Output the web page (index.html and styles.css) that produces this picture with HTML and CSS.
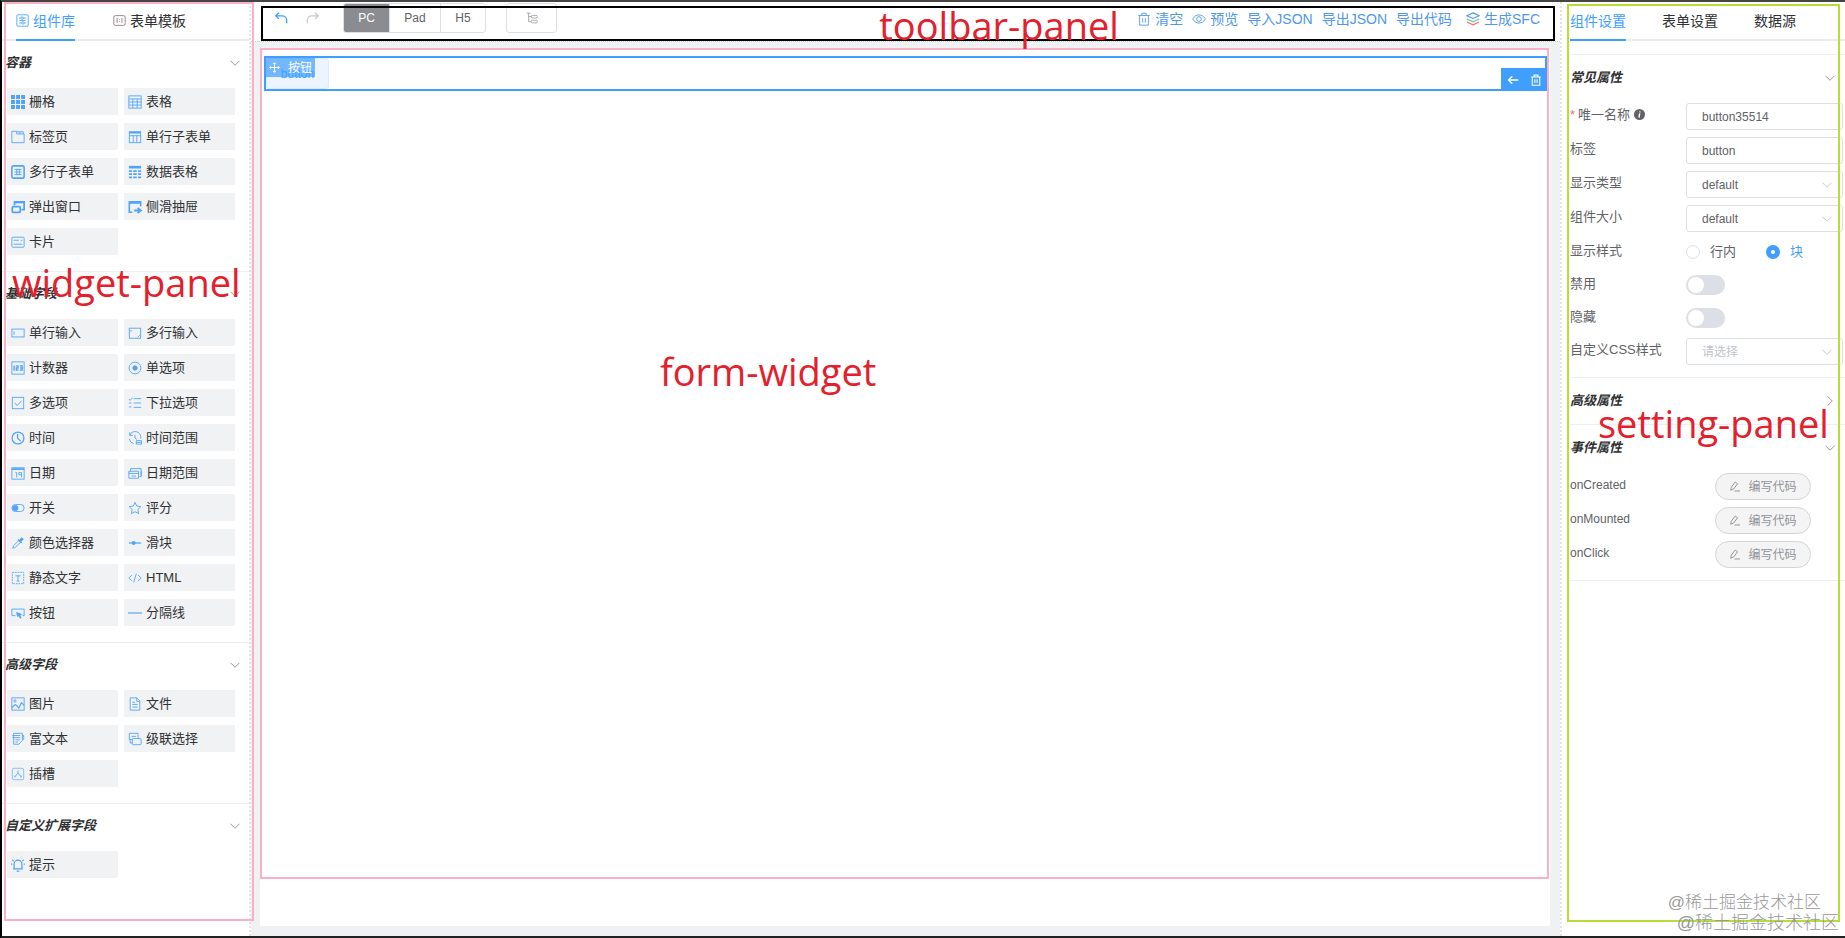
FILE: index.html
```html
<!DOCTYPE html>
<html lang="zh-CN">
<head>
<meta charset="utf-8">
<title>表单设计器</title>
<link rel="stylesheet" href="styles.css">
</head>
<body>
<svg class="sprite" aria-hidden="true">
  <symbol id="down" viewBox="0 0 16 16"><path d="M2 5l6 6 6-6"/></symbol>
  <symbol id="right" viewBox="0 0 16 16"><path d="M5 2l6 6-6 6"/></symbol>
  <symbol id="lib" viewBox="0 0 16 16"><rect x="1" y="1" width="14" height="14" rx="1"/><path d="M3.500 5H6M9 5h3.500M3.500 11H7M10 11h2.500M4 8h8"/><circle cx="7.500" cy="5" r="1.500"/><circle cx="8.500" cy="11" r="1.500"/></symbol>
  <symbol id="tpl" viewBox="0 0 16 16"><rect x="1" y="2" width="14" height="12" rx="2"/><path d="M5 5v6M11 5v6M8 6v1M8 9v1"/></symbol>
  <symbol id="grid" viewBox="0 0 16 16"><path fill="currentColor" stroke="none" d="M0 0h4.500v4.500H0zM5.800 0h4.500v4.500H5.800zM11.500 0H16v4.500h-4.500zM0 5.800h4.500v4.500H0zM5.800 5.800h4.500v4.500H5.800zM11.500 5.800H16v4.500h-4.500zM0 11.500h4.500V16H0zM5.800 11.500h4.500V16H5.800zM11.500 11.500H16V16h-4.500z"/></symbol>
  <symbol id="table" viewBox="0 0 16 16"><rect x="1" y="1" width="14" height="14"/><path d="M1 4.500h14M1 8h14M1 11.500h14M5.500 4.500V15M10.500 4.500V15"/></symbol>
  <symbol id="tab" viewBox="0 0 16 16"><path d="M1 14.500v-13h5.500V4.500H15v10zM6.500 2H10v2.500M10 2h4v2.500"/></symbol>
  <symbol id="subform" viewBox="0 0 16 16"><rect x="1.500" y="2" width="13" height="12.500"/><path d="M1.500 6.500h13M6 6.500v8M10 6.500v8"/><path stroke-width="2" d="M1.500 3h13"/></symbol>
  <symbol id="multiform" viewBox="0 0 16 16"><rect x="1" y="1" width="14" height="14" rx="2" stroke-width="1.800"/><path d="M4 5h8M4 8h8M4 11h8M6.500 4.500v7M9.500 4.500v7"/></symbol>
  <symbol id="data" viewBox="0 0 16 16"><path stroke-width="3" d="M1 2.500h14"/><path stroke-width="2" d="M1 7h3.500M6 7h4M11.500 7H15M1 10.500h3.500M6 10.500h4M11.500 10.500H15M1 14h3.500M6 14h4M11.500 14H15"/></symbol>
  <symbol id="dialog" viewBox="0 0 16 16"><path stroke-width="2" d="M4 6V2h11v9h-3"/><path stroke-width="2.600" d="M4 2.500h11"/><rect x="1.500" y="7.500" width="9" height="6.500" rx="1" stroke-width="2"/></symbol>
  <symbol id="drawer" viewBox="0 0 16 16"><path stroke-width="1.800" d="M5 14H1.500V2h13v5"/><path stroke-width="2.600" d="M1.500 3h13"/><path stroke-width="2.200" d="M7 12h6M11 9l3.500 3-3.500 3"/></symbol>
  <symbol id="card" viewBox="0 0 16 16"><rect x="1" y="2.500" width="14" height="11.500" rx="1"/><path d="M3 6h6M11 6h2M3 10.500h10"/></symbol>
  <symbol id="input" viewBox="0 0 16 16"><rect x="1" y="3.500" width="14" height="9"/><path d="M3.500 6v4"/></symbol>
  <symbol id="textarea" viewBox="0 0 16 16"><rect x="1.500" y="2.500" width="13" height="11.500"/><path d="M3.500 4.500v2M11 13l2.500-2.500"/></symbol>
  <symbol id="number" viewBox="0 0 16 16"><rect x="1" y="1" width="14" height="14"/><path stroke-width="1.500" d="M3.500 5v6M5.500 5.500h2.500V8H6v2.500h2.500M10 5.500h2.800v5H10M10.500 8h2"/></symbol>
  <symbol id="radio" viewBox="0 0 16 16"><circle cx="8" cy="8" r="6.800"/><circle cx="8" cy="8" r="2.500" fill="currentColor"/></symbol>
  <symbol id="check" viewBox="0 0 16 16"><rect x="1.500" y="1.500" width="13" height="13"/><path d="M4.500 8l2.500 3 5-5.500"/></symbol>
  <symbol id="select" viewBox="0 0 16 16"><path d="M6.500 3H15M6.500 8H15M6.500 13H15M1 3.500L2.500 5 5 2M1 8h3M1 12.500h3"/></symbol>
  <symbol id="time" viewBox="0 0 16 16"><circle cx="8" cy="8" r="6.800" stroke-width="1.400"/><path stroke-width="1.400" d="M7.500 3.500V8l3.500 3.500"/></symbol>
  <symbol id="timerange" viewBox="0 0 16 16"><path d="M2 5a6.500 6.500 0 0 1 12.500 3.500M2 1.500V5h3.500M1.500 9a6.500 6.500 0 0 0 5 5.500M8 4.500V8l2 1.500M9.500 11h6v4h-6zM9.500 13h6"/></symbol>
  <symbol id="date" viewBox="0 0 16 16"><rect x="1" y="2" width="14" height="13"/><path stroke-width="2" d="M1 3.500h14"/><path d="M5 7.500h1.500V13M9 7.500h3V13M9 7.500V10h3"/></symbol>
  <symbol id="daterange" viewBox="0 0 16 16"><path d="M3 3h12v8M1 6h11v8H1zM1 8.500h11M3 3v3M4 11.500h5M13 12h2V6"/></symbol>
  <symbol id="switch" viewBox="0 0 16 16"><rect x="1" y="4" width="14" height="8" rx="4"/><circle cx="5" cy="8" r="3" fill="currentColor"/></symbol>
  <symbol id="star" viewBox="0 0 16 16"><path d="M8 1.500l2 4.300 4.700.6-3.400 3.300.8 4.800L8 12.200l-4.100 2.300.8-4.800L1.300 6.400 6 5.800z"/></symbol>
  <symbol id="color" viewBox="0 0 16 16"><path d="M2 14l1-3 6-6 2 2-6 6z"/><path stroke-width="1.600" d="M8 4l4 4"/><path stroke-width="3.400" d="M10.500 5.500l3-3"/></symbol>
  <symbol id="slider" viewBox="0 0 16 16"><path stroke-width="1.400" d="M1 8h14"/><circle cx="6.500" cy="8" r="2.200" fill="currentColor" stroke="none"/></symbol>
  <symbol id="text" viewBox="0 0 16 16"><rect x="1.500" y="1.500" width="13" height="13" stroke-dasharray="2 1"/><path d="M5 5.500h6M8 5.500v6M6.500 11.500h3"/></symbol>
  <symbol id="html" viewBox="0 0 16 16"><path d="M4.500 4.500L1 8l3.500 3.500M11.500 4.500L15 8l-3.500 3.500M9.500 3l-3 10"/></symbol>
  <symbol id="button" viewBox="0 0 16 16"><path d="M5 11H1V3.500h14V11h-2"/><path fill="currentColor" d="M6.500 7.500l5.500 2-2 1 1.500 3-1 .5-1.500-3-1.500 1z"/></symbol>
  <symbol id="line" viewBox="0 0 16 16"><path stroke-width="1.300" d="M0 8h16"/></symbol>
  <symbol id="image" viewBox="0 0 16 16"><rect x="1" y="1" width="14" height="14"/><circle cx="4.500" cy="4.500" r="1.300"/><path stroke-width="1.300" d="M1 12l4-3.500 4 4 3-6 3 3"/></symbol>
  <symbol id="file" viewBox="0 0 16 16"><path d="M2.500 1h7.500l3.500 3.500V15h-11zM10 1v4h3.500M5 6h3M5 8.500h6M5 11.500h6"/></symbol>
  <symbol id="rich" viewBox="0 0 16 16"><path d="M3 1.500h10v8L9 14H3zM1.500 4h9M1.500 6.500h9M5 9h5M5 11.500h3M13 4h1.500v5"/></symbol>
  <symbol id="cascade" viewBox="0 0 16 16"><path d="M5 8.500H1.500v-7h10v6M4 5h5M2.500 8.500v4H5"/><rect x="5" y="7.500" width="10" height="7" rx="1"/></symbol>
  <symbol id="slot" viewBox="0 0 16 16"><rect x="1.500" y="1.500" width="13" height="13" rx="2" opacity=".7"/><path d="M8 4v3L4.500 11M8 7l3.500 4M4.500 10v2M11.500 10v2"/></symbol>
  <symbol id="alert" viewBox="0 0 16 16"><path stroke-width="1.400" d="M3.500 12.500V7a4.500 4.500 0 0 1 9 0v5.500zM2.500 12.500h11M6.500 15h3M1.500 2l1.500 1.500M14.500 2L13 3.500M0 7h1.500M14.500 7H16"/></symbol>
  <symbol id="undo" viewBox="0 0 16 16"><path stroke-width="1.500" d="M5.500 2L2 5.500 5.500 9M2 5.500h7.500a5 5 0 0 1 5 5V14"/></symbol>
  <symbol id="redo" viewBox="0 0 16 16"><path stroke-width="1.500" d="M10.500 2L14 5.500 10.500 9M14 5.500H6.500a5 5 0 0 0-5 5V14"/></symbol>
  <symbol id="tree" viewBox="0 0 16 16"><path d="M1 1.500h5M3.500 1.500V13H7M3.500 6H7"/><rect x="7" y="4.500" width="8" height="3.500" rx="1.500"/><rect x="7" y="11" width="8" height="3.500" rx="1.500"/></symbol>
  <symbol id="trash" viewBox="0 0 16 16"><path d="M1.500 4h13M5.500 4V1.500h5V4M3 4v11h10V4M6.500 7v5M9.500 7v5"/></symbol>
  <symbol id="eye" viewBox="0 0 16 16"><path d="M.8 8C4 1.800 12 1.800 15.200 8 12 14.200 4 14.200.8 8z"/><circle cx="8" cy="8" r="2.700"/></symbol>
  <symbol id="layers" viewBox="0 0 16 16"><path stroke-width="1.300" d="M8 1l7 3.200-7 3.200-7-3.200z"/><path stroke="#5fcf9a" stroke-width="1.300" d="M1 8l7 3.200L15 8"/><path stroke="#f36c6c" stroke-width="1.300" d="M1 11.500l7 3.200 7-3.200"/></symbol>
  <symbol id="move" viewBox="0 0 16 16"><path stroke-width="1.400" d="M8 1v14M1 8h14M6 3l2-2 2 2M6 13l2 2 2-2M3 6L1 8l2 2M13 6l2 2-2 2"/></symbol>
  <symbol id="back" viewBox="0 0 16 16"><path stroke-width="1.800" d="M15 8H2M7 3L2 8l5 5"/></symbol>
  <symbol id="pen" viewBox="0 0 16 16"><path stroke-width="1.400" d="M2.500 13.500l.8-4.500L9 1.500l3.500 2.500-5.700 7.500zM8 14.500h8"/></symbol>
  <symbol id="info" viewBox="0 0 16 16"><circle cx="8" cy="8" r="8" fill="currentColor" stroke="none"/><path stroke="#fff" stroke-width="2" d="M8.800 3.500L8.500 5M8.300 6.500L7.300 12.500"/></symbol>
</svg>

<div class="designer">
  <aside class="widget-panel">
    <div class="tabs widget-tabs" role="tablist">
      <button class="tab active" role="tab" aria-selected="true"><svg class="icon"><use href="#lib"/></svg>组件库</button>
      <button class="tab" role="tab" aria-selected="false"><svg class="icon tpl"><use href="#tpl"/></svg>表单模板</button>
    </div>
    <section class="group">
      <button class="group-head">容器<svg class="icon"><use href="#down"/></svg></button>
      <ul class="widgets">
        <li><svg class="icon"><use href="#grid"/></svg>栅格</li>
        <li><svg class="icon"><use href="#table"/></svg>表格</li>
        <li><svg class="icon"><use href="#tab"/></svg>标签页</li>
        <li><svg class="icon"><use href="#subform"/></svg>单行子表单</li>
        <li><svg class="icon"><use href="#multiform"/></svg>多行子表单</li>
        <li><svg class="icon"><use href="#data"/></svg>数据表格</li>
        <li><svg class="icon"><use href="#dialog"/></svg>弹出窗口</li>
        <li><svg class="icon"><use href="#drawer"/></svg>侧滑抽屉</li>
        <li><svg class="icon"><use href="#card"/></svg>卡片</li>
      </ul>
    </section>
    <section class="group">
      <button class="group-head">基础字段<svg class="icon"><use href="#down"/></svg></button>
      <ul class="widgets">
        <li><svg class="icon"><use href="#input"/></svg>单行输入</li>
        <li><svg class="icon"><use href="#textarea"/></svg>多行输入</li>
        <li><svg class="icon"><use href="#number"/></svg>计数器</li>
        <li><svg class="icon"><use href="#radio"/></svg>单选项</li>
        <li><svg class="icon"><use href="#check"/></svg>多选项</li>
        <li><svg class="icon"><use href="#select"/></svg>下拉选项</li>
        <li><svg class="icon"><use href="#time"/></svg>时间</li>
        <li><svg class="icon"><use href="#timerange"/></svg>时间范围</li>
        <li><svg class="icon"><use href="#date"/></svg>日期</li>
        <li><svg class="icon"><use href="#daterange"/></svg>日期范围</li>
        <li><svg class="icon"><use href="#switch"/></svg>开关</li>
        <li><svg class="icon"><use href="#star"/></svg>评分</li>
        <li><svg class="icon"><use href="#color"/></svg>颜色选择器</li>
        <li><svg class="icon"><use href="#slider"/></svg>滑块</li>
        <li><svg class="icon"><use href="#text"/></svg>静态文字</li>
        <li><svg class="icon"><use href="#html"/></svg>HTML</li>
        <li><svg class="icon"><use href="#button"/></svg>按钮</li>
        <li><svg class="icon"><use href="#line"/></svg>分隔线</li>
      </ul>
    </section>
    <section class="group">
      <button class="group-head">高级字段<svg class="icon"><use href="#down"/></svg></button>
      <ul class="widgets">
        <li><svg class="icon"><use href="#image"/></svg>图片</li>
        <li><svg class="icon"><use href="#file"/></svg>文件</li>
        <li><svg class="icon"><use href="#rich"/></svg>富文本</li>
        <li><svg class="icon"><use href="#cascade"/></svg>级联选择</li>
        <li><svg class="icon"><use href="#slot"/></svg>插槽</li>
      </ul>
    </section>
    <section class="group">
      <button class="group-head">自定义扩展字段<svg class="icon"><use href="#down"/></svg></button>
      <ul class="widgets">
        <li><svg class="icon"><use href="#alert"/></svg>提示</li>
      </ul>
    </section>
    <div class="frame"></div>
    <span class="note">widget-panel</span>
  </aside>

  <main class="center">
    <header class="toolbar-panel">
      <div class="tools">
        <button class="history" aria-label="撤销"><svg class="icon"><use href="#undo"/></svg></button>
        <button class="history off" aria-label="重做"><svg class="icon"><use href="#redo"/></svg></button>
        <div class="devices">
          <button class="on">PC</button><button>Pad</button><button>H5</button>
        </div>
        <button class="tree" aria-label="组件树"><svg class="icon"><use href="#tree"/></svg></button>
      </div>
      <div class="actions">
        <button><svg class="icon"><use href="#trash"/></svg>清空</button>
        <button><svg class="icon"><use href="#eye"/></svg>预览</button>
        <button>导入JSON</button>
        <button>导出JSON</button>
        <button>导出代码</button>
        <button class="sfc"><svg class="icon"><use href="#layers"/></svg>生成SFC</button>
      </div>
      <div class="frame"></div>
      <span class="note">toolbar-panel</span>
    </header>
    <div class="stage">
      <div class="form-widget">
        <div class="selected">
          <button class="plain">button</button>
          <div class="handle"><svg class="icon"><use href="#move"/></svg>按钮</div>
          <div class="ops">
            <button aria-label="选中父组件"><svg class="icon"><use href="#back"/></svg></button>
            <button aria-label="删除"><svg class="icon"><use href="#trash"/></svg></button>
          </div>
        </div>
        <div class="frame"></div>
        <span class="note">form-widget</span>
      </div>
    </div>
  </main>

  <aside class="setting-panel">
    <div class="tabs setting-tabs" role="tablist">
      <button class="tab active" role="tab" aria-selected="true">组件设置</button>
      <button class="tab" role="tab" aria-selected="false">表单设置</button>
      <button class="tab" role="tab" aria-selected="false">数据源</button>
    </div>
    <div class="settings">
      <section class="set-group">
        <button class="set-head">常见属性<svg class="icon"><use href="#down"/></svg></button>
        <div class="rows">
          <div class="row"><label for="name"><span class="req">*</span>唯一名称<svg class="icon info"><use href="#info"/></svg></label><input class="field" id="name" type="text" value="button35514"></div>
          <div class="row"><label for="label">标签</label><input class="field" id="label" type="text" value="button"></div>
          <div class="row"><label for="type">显示类型</label><div class="pick"><select class="field" id="type"><option>default</option></select><svg class="icon"><use href="#down"/></svg></div></div>
          <div class="row"><label for="size">组件大小</label><div class="pick"><select class="field" id="size"><option>default</option></select><svg class="icon"><use href="#down"/></svg></div></div>
          <div class="row small"><span>显示样式</span><div class="radios"><label><input type="radio" name="display">行内</label><label class="chosen"><input type="radio" name="display" checked>块</label></div></div>
          <div class="row small"><label for="disabled">禁用</label><input class="toggle" id="disabled" type="checkbox" role="switch"></div>
          <div class="row small"><label for="hidden">隐藏</label><input class="toggle" id="hidden" type="checkbox" role="switch"></div>
          <div class="row"><label for="css">自定义CSS样式</label><div class="pick"><select class="field empty" id="css"><option>请选择</option></select><svg class="icon"><use href="#down"/></svg></div></div>
        </div>
      </section>
      <section class="set-group">
        <button class="set-head">高级属性<svg class="icon"><use href="#right"/></svg></button>
      </section>
      <section class="set-group last">
        <button class="set-head">事件属性<svg class="icon"><use href="#down"/></svg></button>
        <div class="rows events">
          <div class="row"><span>onCreated</span><button class="code"><svg class="icon"><use href="#pen"/></svg>编写代码</button></div>
          <div class="row"><span>onMounted</span><button class="code"><svg class="icon"><use href="#pen"/></svg>编写代码</button></div>
          <div class="row"><span>onClick</span><button class="code"><svg class="icon"><use href="#pen"/></svg>编写代码</button></div>
        </div>
      </section>
    </div>
    <div class="frame"></div>
    <span class="note">setting-panel</span>
    <div class="marks"><span>@稀土掘金技术社区</span><span>@稀土掘金技术社区</span></div>
  </aside>
</div>
</body>
</html>
```

FILE: styles.css
```css
* { box-sizing: border-box; }

body {
  margin: 0;
  font: 13px/20px "Liberation Sans", "Noto Sans CJK SC", sans-serif;
  color: #303133;
  background: #fff;
}

button, input, select { font: inherit; color: inherit; }
button { padding: 0; border: 0; background: none; cursor: pointer; }

.sprite { position: absolute; width: 0; height: 0; }

.icon {
  width: 14px;
  height: 14px;
  flex: none;
  fill: none;
  stroke: currentColor;
  stroke-width: 1;
}

.designer {
  display: grid;
  grid-template-columns: 249px 1fr 285px;
  min-height: 100vh;
  border-top: 2px solid #444;
  border-left: 2px solid #000;
  border-bottom: 2px solid #222;
}

/* Outlines and captions laid over each panel */
.frame {
  position: absolute;
  z-index: 2;
  border: 2px solid #fbb1c5;
  pointer-events: none;
}

.note {
  position: absolute;
  z-index: 3;
  font: 38px/38px "Open Sans", sans-serif;
  color: #e3202c;
  white-space: nowrap;
  pointer-events: none;
}

/* Tabs */
.tabs {
  display: flex;
  height: 39px;
  border-bottom: 2px solid #e8eaee;
}

.tab {
  display: flex;
  align-items: center;
  gap: 4px;
  height: 39px;
  font-size: 14px;
  border-bottom: 2px solid transparent;
}

.tab.active { color: #409eff; border-color: #409eff; }
.tab .icon { width: 13px; height: 13px; }
.tab .tpl { color: #8a6a74; }

/* Widget panel */
.widget-panel {
  position: relative;
  border-right: 2px dotted #e2e3e5;
}

.widget-panel > .frame { inset: 0 -5px 15px 2px; }
.widget-panel > .note { left: 10px; top: 261px; }
.widget-tabs { gap: 38px; padding-left: 14px; }

.group {
  padding-bottom: 16px;
  border-bottom: 1px solid #ebeef5;
}

.group:last-of-type { border-bottom: 0; }

.group-head, .set-head {
  display: flex;
  align-items: center;
  justify-content: space-between;
  width: 100%;
  font-weight: bold;
  font-style: italic;
}

.group-head { height: 44px; padding: 0 8px 0 3px; }
.group-head .icon, .set-head .icon, .pick .icon { width: 12px; height: 12px; color: #73767a; }

.widgets {
  display: grid;
  grid-template-columns: 1fr 1fr;
  gap: 8px 6px;
  margin: 0;
  padding: 3px 14px 0 5px;
  list-style: none;
}

.widgets li {
  display: flex;
  align-items: center;
  gap: 4px;
  height: 27px;
  padding-left: 4px;
  background: #f1f2f3;
}

.widgets .icon { color: #4fa3fb; }

/* Toolbar */
.center {
  display: flex;
  flex-direction: column;
  min-width: 0;
  background: #f0f1f3;
}

.toolbar-panel {
  position: relative;
  display: flex;
  justify-content: space-between;
  height: 40px;
  padding: 1px 20px 0 23px;
  background: #fff;
  border-bottom: 1px dotted #ccc;
}

.toolbar-panel > .frame { inset: 4px 5px 0 10px; border-color: #000; }
.toolbar-panel > .note { left: 48%; top: 4px; }

.tools { display: flex; height: 30px; font-size: 12px; color: #606266; }
.history { width: 14px; margin-right: 18px; color: #409eff; }
.history .icon { display: block; }
.history.off { color: #c8cacd; margin-right: 23px; }

.devices { display: flex; border: 1px solid #dcdfe6; border-radius: 3px; }
.devices button { width: 51px; border-right: 1px solid #dcdfe6; }
.devices button:last-child { width: 44px; border-right: 0; }
.devices .on { width: 46px; color: #fff; background: #8a8c92; border-radius: 2px 0 0 2px; }

.tree { width: 51px; margin-left: 20px; color: #909399; border: 1px solid #dcdfe6; border-radius: 3px; }
.tree .icon { display: block; width: 12px; height: 12px; margin: auto; }

.actions { display: flex; gap: 9px; height: 32px; font-size: 14px; color: #4f98e8; }
.actions button { display: flex; align-items: center; gap: 4px; }
.actions .sfc { margin-left: 5px; }

/* Form canvas */
.stage { display: flex; flex: 1; padding: 8px 10px 10px 9px; }
.form-widget { position: relative; flex: 1; padding: 6px 3px 0 4px; background: #fff; }
.form-widget > .frame { inset: -2px 1px 47px 0; }
.form-widget > .note { left: 31%; top: 302px; }

.selected { position: relative; height: 35px; border: 2px solid #409eff; }
.plain {
  display: block;
  width: 63px;
  height: 31px;
  font-size: 12px;
  color: #409eff;
  background: #ecf5ff;
  border: 1px solid #d9ecff;
  border-radius: 3px;
}

.handle {
  position: absolute;
  left: 0;
  top: 0;
  display: flex;
  align-items: center;
  gap: 8px;
  height: 19px;
  padding: 0 3px;
  font-size: 12px;
  color: #fff;
  background: rgba(64, 158, 255, .7);
}
.handle .icon { width: 11px; height: 11px; }

.ops {
  position: absolute;
  right: -2px;
  bottom: -2px;
  display: flex;
  gap: 11px;
  height: 23px;
  padding: 0 5px 0 6px;
  color: #fff;
  background: #409eff;
}
.ops button { display: flex; align-items: center; }
.ops .icon { width: 12px; height: 12px; stroke-width: 1.4; }

/* Setting panel */
.setting-panel {
  position: relative;
  padding-left: 8px;
  border-left: 2px dotted #e2e3e5;
}

.setting-panel > .frame { inset: 2px 5px 14px; border-color: #b8de35; }
.setting-panel > .note { left: 36px; top: 402px; }

.setting-tabs { gap: 36px; }
.settings { margin-top: 13px; color: #606266; }

.set-group { border-top: 1px solid #ebeef5; }
.set-group.last { border-bottom: 1px solid #ebeef5; }
.set-head { height: 46px; padding-right: 9px; color: #303133; }

.rows { display: grid; gap: 7px; padding: 2px 2px 12px 0; }
.row { display: grid; grid-template-columns: 116px 1fr; height: 27px; line-height: 24px; }
.row.small { height: 26px; }
.req { color: #f56c6c; margin-right: 3px; }
.info { width: 11px; height: 11px; margin-left: 4px; vertical-align: -1px; }

.field {
  width: 100%;
  height: 27px;
  padding: 0 15px;
  font-size: 12px;
  background: #fff;
  border: 1px solid #dcdfe6;
  border-radius: 3px;
  appearance: none;
}

.field.empty { color: #c0c4cc; }
.pick { position: relative; }
.pick .icon { position: absolute; right: 10px; top: 8px; color: #b4b8c0; }

.radios { display: flex; align-items: center; gap: 30px; }
.radios label { display: flex; align-items: center; gap: 10px; }
.radios .chosen { color: #409eff; }
.radios input { width: 14px; height: 14px; margin: 0; border: 1px solid #dcdfe6; border-radius: 50%; appearance: none; }
.radios input:checked { border: 5px solid #409eff; }

.toggle {
  align-self: center;
  width: 39px;
  height: 20px;
  margin: 0;
  padding: 2px;
  background: #dcdfe6;
  border-radius: 10px;
  appearance: none;
}
.toggle::before { content: ""; display: block; width: 16px; height: 16px; background: #fff; border-radius: 50%; }

.events { font-size: 12px; }
.events .row { grid-template-columns: 145px 96px; }
.code {
  display: flex;
  align-items: center;
  justify-content: center;
  gap: 8px;
  color: #909399;
  background: #f4f4f5;
  border: 1px solid #d3d4d6;
  border-radius: 14px;
}
.code .icon { width: 11px; height: 11px; }

.marks {
  position: absolute;
  right: 6px;
  bottom: 3px;
  z-index: 4;
  display: grid;
  font-size: 18px;
  font-weight: 300;
  line-height: 20px;
  color: #999;
}
.marks span:first-child { padding-right: 18px; font-size: 17px; }
.marks span { text-align: right; }
```
